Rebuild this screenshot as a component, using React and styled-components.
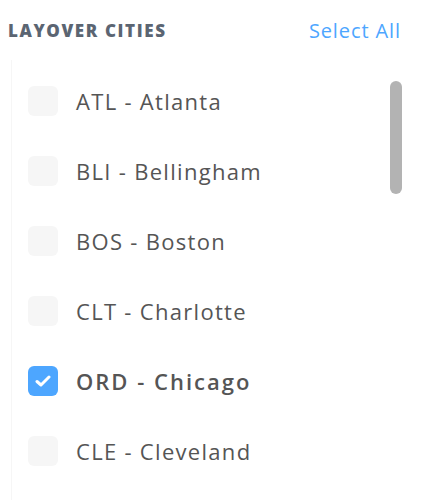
import React from "react";
import styled, { createGlobalStyle } from "styled-components";

const Global = createGlobalStyle`
  html, body { margin: 0; padding: 0; background: #fff; }
  body { font-family: "Open Sans", "Noto Sans", sans-serif; }
`;

const Page = styled.div`
  width: 422px;
  height: 500px;
  overflow: hidden;
  position: relative;
`;

const Header = styled.div`
  display: flex;
  align-items: center;
  justify-content: space-between;
  height: 60px;
  padding: 0 21px 0 8px;
`;

const Title = styled.h2`
  margin: 0;
  font-size: 17px;
  font-weight: 800;
  color: #5b6572;
  letter-spacing: 1.6px;
`;

const SelectAll = styled.button`
  border: 0;
  background: none;
  padding: 0;
  font-family: inherit;
  font-size: 20px;
  color: #4da6ff;
  letter-spacing: 0.9px;
  cursor: pointer;
`;

const Panel = styled.div`
  margin-left: 11px;
  border-left: 1px solid #f6f6f6;
  padding-top: 6px;
  position: relative;
  height: 434px;
`;

const List = styled.ul`
  list-style: none;
  margin: 0;
  padding: 0;
`;

const Row = styled.li`
  display: flex;
  align-items: center;
  height: 70px;
  padding-left: 16px;
  gap: 18px;
`;

const Box = styled.span`
  width: 30px;
  height: 30px;
  border-radius: 6px;
  background: ${(p) => (p.$checked ? "#4da6ff" : "#f6f6f6")};
  display: flex;
  align-items: center;
  justify-content: center;
  flex: none;
`;

const Label = styled.span`
  font-size: 22px;
  color: #555;
  letter-spacing: ${(p) => (p.$checked ? "2px" : "1.3px")};
  font-weight: ${(p) => (p.$checked ? 600 : 400)};
`;

const Thumb = styled.div`
  position: absolute;
  right: 20px;
  top: 21px;
  width: 12px;
  height: 113px;
  border-radius: 6px;
  background: #b3b3b3;
`;

const cities = [
  ["ATL - Atlanta", false],
  ["BLI - Bellingham", false],
  ["BOS - Boston", false],
  ["CLT - Charlotte", false],
  ["ORD - Chicago", true],
  ["CLE - Cleveland", false],
];

export default function App() {
  return (
    <Page>
      <Global />
      <Header>
        <Title>LAYOVER CITIES</Title>
        <SelectAll>Select All</SelectAll>
      </Header>
      <Panel>
        <List>
          {cities.map(([name, checked]) => (
            <Row key={name}>
              <Box $checked={checked}>
                {checked && (
                  <svg width="16" height="12" viewBox="0 0 16 12">
                    <path d="M2 6.5 L6 10 L14 2" fill="none" stroke="#fff" strokeWidth="3" strokeLinecap="round" strokeLinejoin="round" />
                  </svg>
                )}
              </Box>
              <Label $checked={checked}>{name}</Label>
            </Row>
          ))}
        </List>
        <Thumb />
      </Panel>
    </Page>
  );
}
